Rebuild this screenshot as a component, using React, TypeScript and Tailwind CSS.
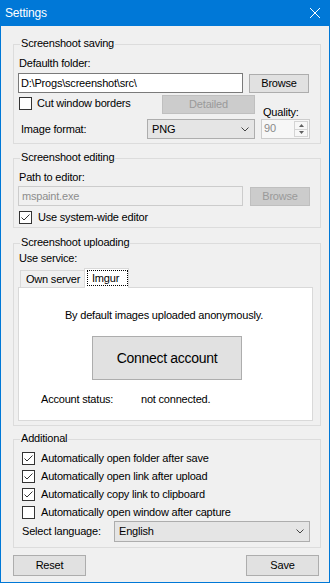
import React from "react";

const Check = ({ checked }: { checked: boolean }) => (
  <div className="w-[13px] h-[13px] border border-[#333333] bg-white flex-none">
    {checked && (
      <svg width="11" height="11" viewBox="0 0 11 11" className="block">
        <path d="M1.5 5.5 L4 8 L9.5 2.5" stroke="#333333" strokeWidth="1" fill="none" />
      </svg>
    )}
  </div>
);

const Chevron = () => (
  <svg width="8" height="5" viewBox="0 0 8 5" className="block">
    <path d="M0.5 0.5 L4 4 L7.5 0.5" stroke="#444444" strokeWidth="1" fill="none" />
  </svg>
);

const Group = ({
  title,
  className,
  children,
}: {
  title: string;
  className: string;
  children: React.ReactNode;
}) => (
  <div className={"relative border border-[#dcdcdc] w-[308px] flex flex-col " + className}>
    <span className="absolute -top-[8px] left-[6px] px-[1px] bg-[#f0f0f0] leading-[13px]">{title}</span>
    {children}
  </div>
);

const CheckRow = ({ checked, label }: { checked: boolean; label: string }) => (
  <div className="h-[18px] flex items-center">
    <Check checked={checked} />
    <span className="ml-[6px]">{label}</span>
  </div>
);

export default function App() {
  return (
    <div className="w-[330px] h-[583px] flex flex-col bg-[#f0f0f0] border-x border-b border-[#0078d7] font-['Liberation_Sans',Arial,sans-serif] text-[11px] leading-[13px] tracking-[-0.2px] text-black">
      <div className="h-[26px] flex-none bg-[#0078d7] flex items-center pl-[4px] pr-[9px] text-white text-[12px]">
        <span>Settings</span>
        <svg className="ml-auto block" width="10" height="10" viewBox="0 0 10 10">
          <path d="M0 0 L10 10 M10 0 L0 10" stroke="white" strokeWidth="1" fill="none" />
        </svg>
      </div>

      <div className="flex-1 flex flex-col pl-[12px]">
        {/* Group 1 */}
        <Group title="Screenshoot saving" className="mt-[18px] pl-[4px] pt-[12px] pb-[4px]">
          <div className="ml-[1px] h-[13px]">Defaulth folder:</div>
          <div className="flex mt-[3px] h-[20px]">
            <div className="w-[225px] h-[20px] border border-[#7a7a7a] bg-white flex items-center pl-[2px]">
              D:\Progs\screenshot\src\
            </div>
            <div className="ml-[6px] mt-[1px] w-[60px] h-[19px] border border-[#adadad] bg-[#e1e1e1] flex items-center justify-center">
              Browse
            </div>
          </div>
          <div className="flex h-[24px] mt-[2px]">
            <div className="w-[144px] flex items-start">
              <div className="flex items-center mt-[2px] ml-[1px]">
                <Check checked={false} />
                <span className="ml-[5px]">Cut window borders</span>
              </div>
            </div>
            <div className="w-[93px] h-[19px] bg-[#cccccc] border border-[#bfbfbf] text-[#9a9a9a] flex items-center justify-center">
              Detailed
            </div>
            <span className="self-end ml-[8px]">Quality:</span>
          </div>
          <div className="flex h-[20px]">
            <div className="w-[129px] flex items-center pl-[3px]">Image format:</div>
            <div className="w-[108px] h-[20px] border border-[#adadad] bg-[#e5e5e5] flex items-center pl-[4px] pr-[5px]">
              <span>PNG</span>
              <span className="ml-auto">
                <Chevron />
              </span>
            </div>
            <div className="ml-[6px] w-[49px] h-[20px] border border-[#cccccc] bg-[#f7f7f7] flex">
              <span className="flex-1 pl-[2px] pt-[2px] text-[#8a8a8a]">90</span>
              <div className="w-[15px] flex flex-col py-[1px] pr-[1px]">
                <div className="flex-1 border border-[#d4d4d4] flex items-center justify-center">
                  <svg width="5" height="3" viewBox="0 0 5 3" className="block">
                    <path d="M0 3 L2.5 0 L5 3 Z" fill="#606060" />
                  </svg>
                </div>
                <div className="flex-1 border-x border-b border-[#d4d4d4] flex items-center justify-center">
                  <svg width="5" height="3" viewBox="0 0 5 3" className="block">
                    <path d="M0 0 L2.5 3 L5 0 Z" fill="#606060" />
                  </svg>
                </div>
              </div>
            </div>
          </div>
        </Group>

        {/* Group 2 */}
        <Group title="Screenshoot editing" className="mt-[14px] pl-[4px] pt-[12px] pb-[3px]">
          <div className="ml-[1px] h-[13px]">Path to editor:</div>
          <div className="flex mt-[2px] h-[20px]">
            <div className="w-[225px] h-[20px] border border-[#cccccc] bg-[#f0f0f0] flex items-center pl-[3px] text-[#8d8d8d]">
              mspaint.exe
            </div>
            <div className="ml-[7px] mt-[1px] w-[60px] h-[19px] border border-[#bfbfbf] bg-[#cccccc] text-[#9a9a9a] flex items-center justify-center">
              Browse
            </div>
          </div>
          <div className="flex items-center mt-[5px] ml-[1px] h-[13px]">
            <Check checked={true} />
            <span className="ml-[6px]">Use system-wide editor</span>
          </div>
        </Group>

        {/* Group 3 */}
        <Group title="Screenshoot uploading" className="mt-[15px] pl-[4px] pt-[8px] pb-[4px]">
          <div className="ml-[1px] h-[13px]">Use service:</div>
          <div className="flex items-end h-[19px] mt-[3px]">
            <div className="ml-[2px] w-[64px] h-[17px] border-t border-l border-[#d9d9d9] bg-[#f0f0f0] flex items-center pl-[5px]">
              Own server
            </div>
            <div className="relative z-10 w-[45px] h-[20px] -mb-[1px] border-x border-t border-[#d9d9d9] bg-white pl-[2px] pt-[1px]">
              <div className="w-[41px] h-[16px] border border-dotted border-black flex items-center pl-[4px]">
                Imgur
              </div>
            </div>
          </div>
          <div className="w-[295px] h-[134px] border border-[#d9d9d9] bg-white flex flex-col">
            <div className="pt-[21px] text-center pr-[3px] h-[34px]">By default images uploaded anonymously.</div>
            <div className="mt-[14px] ml-[73px] w-[150px] h-[44px] border border-[#adadad] bg-[#e1e1e1] flex items-center justify-center text-[14px] tracking-[-0.3px]">
              Connect account
            </div>
            <div className="mt-[13px] ml-[22px] flex h-[13px]">
              <span className="w-[100px]">Account status:</span>
              <span>not connected.</span>
            </div>
          </div>
        </Group>

        {/* Group 4 */}
        <Group title="Additional" className="mt-[13px] pl-[8px] pt-[9px] pb-[5px]">
          <CheckRow checked={true} label="Automatically open folder after save" />
          <CheckRow checked={true} label="Automatically open link after upload" />
          <CheckRow checked={true} label="Automatically copy link to clipboard" />
          <CheckRow checked={false} label="Automatically open window after capture" />
          <div className="flex items-center h-[21px]">
            <span className="w-[92px]">Select language:</span>
            <div className="w-[196px] h-[21px] border border-[#adadad] bg-[#e5e5e5] flex items-center pl-[4px] pr-[5px]">
              <span>English</span>
              <span className="ml-auto">
                <Chevron />
              </span>
            </div>
          </div>
        </Group>

        <div className="mt-[7px] w-[306px] flex justify-between">
          <div className="w-[73px] h-[21px] border border-[#adadad] bg-[#e1e1e1] flex items-center justify-center">
            Reset
          </div>
          <div className="w-[73px] h-[21px] border border-[#adadad] bg-[#e1e1e1] flex items-center justify-center">
            Save
          </div>
        </div>
      </div>
    </div>
  );
}
